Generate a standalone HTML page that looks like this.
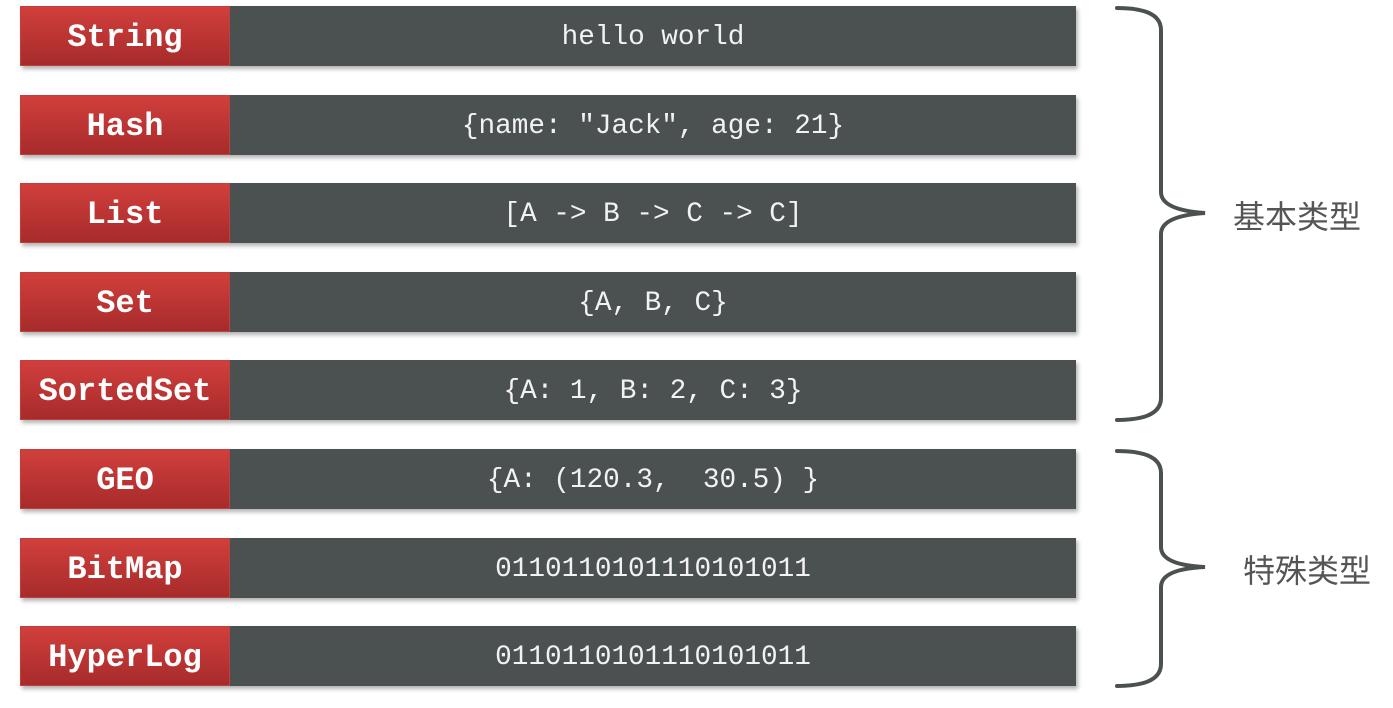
<!DOCTYPE html>
<html><head><style>
body{margin:0;width:1393px;height:708px;background:#fff;position:relative;overflow:hidden}
.row{position:absolute;left:20px;width:1056px;height:60px;box-shadow:2px 3px 4px rgba(0,0,0,.3)}
.k{position:absolute;left:0;top:0;width:208px;height:58px;border:1px solid #c0403d;background:linear-gradient(#d13f3c,#a72b2b);color:#fff;font:bold 32px "Liberation Mono",monospace;text-align:center;line-height:62px}
.v{position:absolute;left:210px;top:0;right:0;height:60px;background:#4b5050;color:#f2f2f2;font:27.7px "Liberation Mono",monospace;text-align:center;line-height:64px;white-space:pre}
.t{position:absolute;font:32px "Noto Sans CJK SC",sans-serif;color:#555;line-height:40px}
</style></head><body>
<div class="row" style="top:6px"><div class="k">String</div><div class="v">hello world</div></div>
<div class="row" style="top:95px"><div class="k">Hash</div><div class="v">{name: "Jack", age: 21}</div></div>
<div class="row" style="top:183px"><div class="k">List</div><div class="v">[A -&gt; B -&gt; C -&gt; C]</div></div>
<div class="row" style="top:272px"><div class="k">Set</div><div class="v">{A, B, C}</div></div>
<div class="row" style="top:360px"><div class="k">SortedSet</div><div class="v">{A: 1, B: 2, C: 3}</div></div>
<div class="row" style="top:449px"><div class="k">GEO</div><div class="v">{A: (120.3,  30.5) }</div></div>
<div class="row" style="top:538px"><div class="k">BitMap</div><div class="v">0110110101110101011</div></div>
<div class="row" style="top:626px"><div class="k">HyperLog</div><div class="v">0110110101110101011</div></div>
<svg width="1393" height="708" style="position:absolute;left:0;top:0" fill="none" stroke="#4b5050" stroke-width="4" stroke-linecap="round">
<path d="M1117 8 Q1161 8 1161 30 V192 Q1161 210 1205 213 Q1161 216 1161 234 V398 Q1161 420 1117 420"/>
<path d="M1117 451 Q1161 451 1161 473 V547 Q1161 565 1205 567 Q1161 569 1161 587 V664 Q1161 686 1117 686"/>
</svg>
<div class="t" style="left:1233px;top:195px">基本类型</div>
<div class="t" style="left:1243px;top:549px">特殊类型</div>
</body></html>
